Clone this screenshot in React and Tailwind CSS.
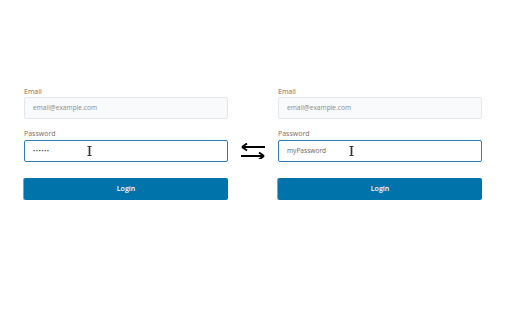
import React from "react";

function IBeam({ className }) {
  return (
    <svg className={className} width="5" height="10" viewBox="0 0 5 10">
      <path d="M0.5 0.5H4.5M0.5 9.5H4.5M2.5 0.5V9.5" stroke="#333" strokeWidth="1" fill="none" />
      <path d="M1.5 1.5V8.5M3.5 1.5V8.5" stroke="#bbb" strokeWidth="1" fill="none" />
    </svg>
  );
}

function Form({ password, cursorLeft }) {
  return (
    <div className="w-[204px] flex flex-col">
      <label className="text-[7px] leading-[10px] h-[10px] text-[#806c5e]">Email</label>
      <div className="h-[22px] border border-[#e3e7eb] bg-[#f8fafb] rounded-[2px] flex items-center px-[8px] text-[6.6px] text-[#8a8a8a]">
        email@example.com
      </div>
      <label className="mt-[10px] text-[7px] leading-[10px] h-[10px] text-[#806c5e]">Password</label>
      <div className="mt-[1px] h-[22px] border border-[#2f7db6] bg-white rounded-[2px] flex items-center px-[8px] text-[6.6px] relative">
        {password ? (
          <span className="text-[#333] tracking-[0.5px] text-[6px]">••••••</span>
        ) : (
          <span className="text-[#666]">myPassword</span>
        )}
        <IBeam className={"absolute top-[5px] " + (cursorLeft)} />
      </div>
      <button className="mt-[16px] h-[22px] bg-[#0073aa] rounded-[2px] text-white text-[7px] font-semibold shadow-[-1px_0_0_#8aa0b4]">
        Login
      </button>
    </div>
  );
}

export default function App() {
  return (
    <div className="w-[512px] h-[320px] bg-white flex pt-[87px] pl-[24px]" style={{ fontFamily: '"Open Sans", "Noto Sans", sans-serif' }}>
      <Form password cursorLeft="left-[62px]" />
      <div className="w-[50px] flex justify-center pt-[56px]">
        <svg width="26" height="16" viewBox="0 0 26 16">
          <path d="M2 4H25M2 4L7 0.5M2 4L7 7.5" stroke="#000" strokeWidth="2" fill="none" />
          <path d="M1 13H24M24 13L19 9.5M24 13L19 16.5" stroke="#000" strokeWidth="2" fill="none" />
        </svg>
      </div>
      <Form cursorLeft="left-[70px]" />
    </div>
  );
}
